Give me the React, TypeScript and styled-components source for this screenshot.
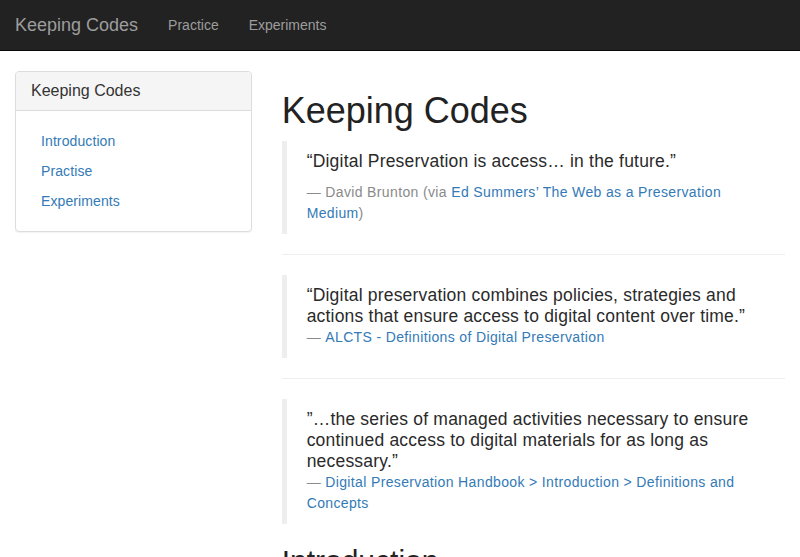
import React from "react";
import styled, { createGlobalStyle } from "styled-components";

const Global = createGlobalStyle`
  * { box-sizing: border-box; }
  html, body { margin: 0; padding: 0; background: #fff; }
  body {
    font-family: "Liberation Sans", Arial, Helvetica, sans-serif;
    font-size: 14px;
    line-height: 1.42857;
    color: #333;
  }
`;

const Navbar = styled.nav`
  display: flex;
  align-items: center;
  height: 51px;
  background: #222;
  border-bottom: 1px solid #080808;
  margin-bottom: 20px;
`;

const Brand = styled.a`
  display: block;
  padding: 15px;
  font-size: 18px;
  line-height: 20px;
  color: #9d9d9d;
  text-decoration: none;
`;

const NavList = styled.ul`
  display: flex;
  list-style: none;
  margin: 0;
  padding: 0;
`;

const NavLink = styled.a`
  display: block;
  padding: 15px;
  line-height: 20px;
  color: #9d9d9d;
  text-decoration: none;
`;

const Row = styled.div`
  display: grid;
  grid-template-columns: 1fr 2fr;
`;

const Col = styled.div`
  padding: 0 15px;
  min-width: 0;
`;

const Panel = styled.div`
  border: 1px solid #ddd;
  border-radius: 4px;
  box-shadow: 0 1px 1px rgba(0, 0, 0, 0.05);
  background: #fff;
  margin-bottom: 20px;
`;

const PanelHeading = styled.div`
  padding: 10px 15px;
  background: #f5f5f5;
  border-bottom: 1px solid #ddd;
  border-radius: 3px 3px 0 0;
  font-size: 16px;
  line-height: 1.1;
  color: #333;
`;

const PanelBody = styled.div`
  padding: 15px;
`;

const SideList = styled.ul`
  list-style: none;
  margin: 0;
  padding: 0;
`;

const SideLink = styled.a`
  display: block;
  padding: 5px 10px;
  line-height: 20px;
  letter-spacing: 0.1px;
  color: #337ab7;
  text-decoration: none;
`;

const Title = styled.h1`
  margin: 20px 0 10px;
  font-size: 36px;
  font-weight: 400;
  line-height: 1.1;
  color: #222;
`;

const SubTitle = styled.h2`
  margin: 20px 0 10px;
  font-size: 30px;
  font-weight: 400;
  line-height: 1.1;
  color: #222;
`;

const Quote = styled.blockquote`
  margin: 0 0 20px;
  padding: 10px 20px;
  border-left: 5px solid #eee;
  font-size: 17.5px;
  line-height: 21px;
  letter-spacing: 0.2px;
  color: #2a2a2a;
`;

const QuoteText = styled.p<{ $spaced?: boolean }>`
  margin: 0 0 ${(p) => (p.$spaced ? "10px" : "0")};
`;

const Source = styled.footer`
  display: block;
  font-size: 14px;
  line-height: 21px;
  letter-spacing: 0.36px;
  color: #8a8a8a;
  &::before {
    content: "\\2014 \\00A0";
  }
`;

const Link = styled.a`
  color: #337ab7;
  text-decoration: none;
`;

const Rule = styled.hr`
  margin: 20px 0;
  border: 0;
  border-top: 1px solid #eee;
`;

export default function App() {
  return (
    <>
      <Global />
      <Navbar>
        <Brand href="#">Keeping Codes</Brand>
        <NavList>
          <li><NavLink href="#">Practice</NavLink></li>
          <li><NavLink href="#">Experiments</NavLink></li>
        </NavList>
      </Navbar>
      <Row>
        <Col>
          <Panel>
            <PanelHeading>Keeping Codes</PanelHeading>
            <PanelBody>
              <SideList>
                <li><SideLink href="#">Introduction</SideLink></li>
                <li><SideLink href="#">Practise</SideLink></li>
                <li><SideLink href="#">Experiments</SideLink></li>
              </SideList>
            </PanelBody>
          </Panel>
        </Col>
        <Col>
          <Title>Keeping Codes</Title>
          <Quote>
            <QuoteText $spaced>“Digital Preservation is access… in the future.”</QuoteText>
            <Source>
              David Brunton (via <Link href="#">Ed Summers’ The Web as a Preservation Medium</Link>)
            </Source>
          </Quote>
          <Rule />
          <Quote>
            <QuoteText>“Digital preservation combines policies, strategies and actions that ensure access to digital content over time.”</QuoteText>
            <Source>
              <Link href="#">ALCTS - Definitions of Digital Preservation</Link>
            </Source>
          </Quote>
          <Rule />
          <Quote>
            <QuoteText>”…the series of managed activities necessary to ensure continued access to digital materials for as long as necessary.”</QuoteText>
            <Source>
              <Link href="#">Digital Preservation Handbook &gt; Introduction &gt; Definitions and Concepts</Link>
            </Source>
          </Quote>
          <SubTitle>Introduction</SubTitle>
        </Col>
      </Row>
    </>
  );
}
